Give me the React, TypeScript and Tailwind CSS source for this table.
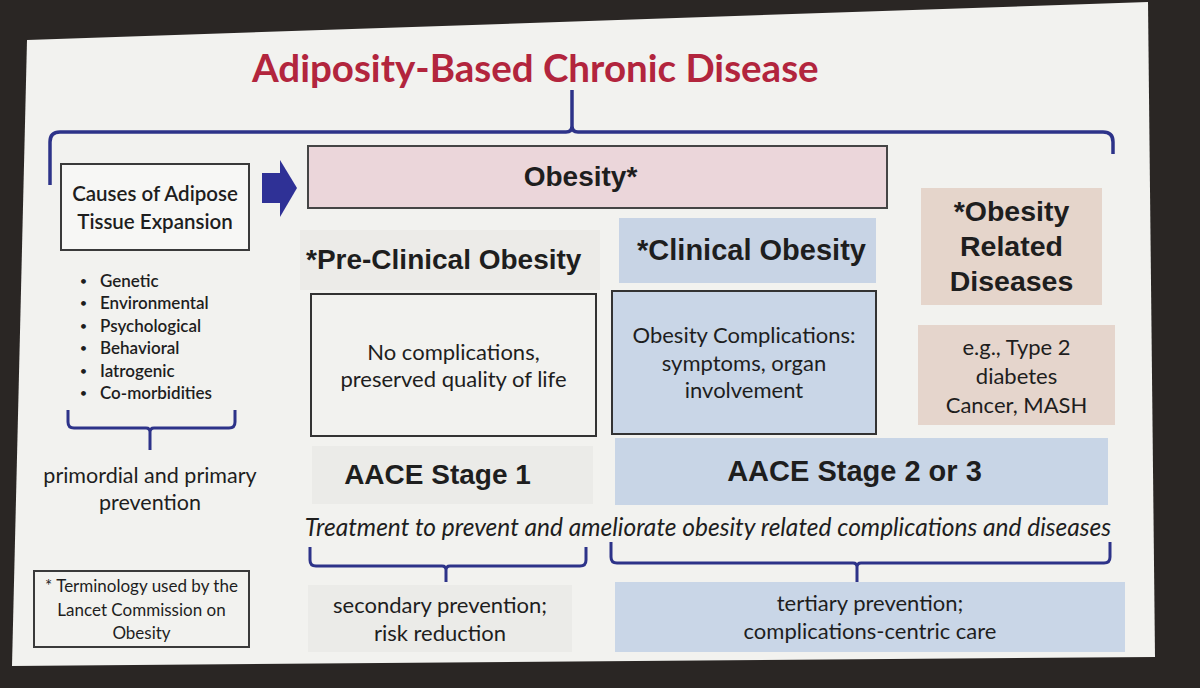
const cal = "[font-family:Lato,'Open_Sans',sans-serif]";
const ari = "[font-family:'Liberation_Sans',Arial,sans-serif]";

const causes = [
	"Genetic",
	"Environmental",
	"Psychological",
	"Behavioral",
	"Iatrogenic",
	"Co-morbidities",
];

// curly brace, opening downward (ends up, tip down)
const DownBrace = ({ x1, x2, tip, line, h }: { x1: number; x2: number; tip: number; line: number; h: number }) => (
	<path
		d={`M${x1},0 L${x1},${line - 6} Q${x1},${line} ${x1 + 6},${line} L${tip - 4},${line} Q${tip},${line} ${tip},${line + 4} L${tip},${h} M${tip},${line + 4} Q${tip},${line} ${tip + 4},${line} L${x2 - 6},${line} Q${x2},${line} ${x2},${line - 6} L${x2},0`}
		fill="none"
		stroke="#2d3389"
		strokeWidth={3}
	/>
);

export default function App() {
	return (
		<div className="w-[1200px] h-[688px] overflow-hidden bg-[#2a2624] pl-[12px]">
			<div className="w-[1144px] h-[666px] bg-[#f2f2ef] [clip-path:polygon(15px_40px,1136px_2px,1143px_657px,0px_666px)] flex flex-col text-[#1e1e1e]">
				<h1 className={`${cal} ml-[240px] mt-[44px] text-[38.5px] leading-[46px] font-bold text-[#b2253d]`}>
					Adiposity-Based Chronic Disease
				</h1>

				{/* big brace across the top */}
				<svg width="1138" height="47" className="block overflow-visible shrink-0">
					<path
						d="M38,95 L38,52 Q38,42 48,42 L554,42 Q560,42 560,36 L560,0 M560,36 Q560,42 566,42 L1091,42 Q1101,42 1101,52 L1101,64"
						fill="none"
						stroke="#2d3389"
						strokeWidth={3.5}
					/>
				</svg>

				<div className="flex">
					{/* left column */}
					<div className={`${cal} ml-[16px] w-[234px] flex flex-col`}>
						<div className="mt-[26px] ml-[32px] w-[190px] h-[88px] border-2 border-[#3a3a3a] bg-[#f7f7f5] flex items-center justify-center text-center text-[20.5px] leading-[28px] font-semibold">
							Causes of Adipose
							<br />
							Tissue Expansion
						</div>
						<ul className="mt-[19px] ml-[52px] text-[17px] leading-[22.4px] font-semibold">
							{causes.map((c) => (
								<li key={c} className="flex items-center">
									<span className="w-[20px] text-[12px]">•</span>
									{c}
								</li>
							))}
						</ul>
						<svg width="234" height="40" className="block mt-[6px]">
							<DownBrace x1={40} x2={207} tip={122} line={18} h={40} />
						</svg>
						<p className="mt-[12px] pl-[10px] text-center text-[21.5px] leading-[27px]">
							primordial and primary
							<br />
							prevention
						</p>
						<div className="mt-[54px] ml-[5px] w-[217px] h-[78px] border-2 border-[#3a3a3a] flex items-center justify-center text-center text-[17px] leading-[23.5px]">
							<span>
								* Terminology used by the
								<br />
								Lancet Commission on
								<br />
								Obesity
							</span>
						</div>
					</div>

					{/* arrow */}
					<svg width="38" height="58" className="block mt-[23px] shrink-0">
						<rect x="0" y="13" width="20" height="30" fill="#2f3196" />
						<polygon points="18,0 35,28 18,57" fill="#2f3196" />
					</svg>

					{/* right area */}
					<div className="w-[830px] flex flex-col">
						<div className="flex">
							<div className="w-[588px] flex flex-col">
								<div className={`${ari} mt-[8px] ml-[7px] w-[581px] h-[64px] border-2 border-[#454545] bg-[#ebd6da] flex items-center justify-center pr-[34px] text-[28px] font-bold`}>
									Obesity*
								</div>
								<div className={`${ari} h-[81px] flex items-start font-bold`}>
									<div className="mt-[21px] w-[300px] h-[60px] bg-[#ecebe8] flex items-center pl-[6px] text-[28px]">
										*Pre-Clinical Obesity
									</div>
									<div className="mt-[9px] ml-[19px] w-[257px] h-[65px] bg-[#c8d4e5] flex items-center justify-center pl-[8px] text-[29px]">
										*Clinical Obesity
									</div>
								</div>
								<div className={`${cal} flex items-start text-[22px] leading-[27.5px]`}>
									<div className="mt-[3px] ml-[10px] w-[287px] h-[144px] border-2 border-[#333] flex items-center justify-center text-center">
										<span>
											No complications,
											<br />
											preserved quality of life
										</span>
									</div>
									<div className="ml-[14px] w-[266px] h-[145px] border-2 border-[#333] bg-[#c9d6e7] flex items-center justify-center text-center">
										<span>
											Obesity Complications:
											<br />
											symptoms, organ
											<br />
											involvement
										</span>
									</div>
								</div>
							</div>

							<div className="ml-[27px] w-[205px] flex flex-col">
								<div className={`${ari} mt-[51px] ml-[6px] w-[181px] h-[117px] bg-[#e5d5cb] flex items-center justify-center text-center text-[28.5px] leading-[35px] font-bold`}>
									<span>
										*Obesity
										<br />
										Related
										<br />
										Diseases
									</span>
								</div>
								<div className={`${cal} mt-[20px] ml-[3px] w-[197px] h-[100px] bg-[#e5d5cc] flex items-center justify-center text-center text-[22px] leading-[29px]`}>
									<span>
										e.g., Type 2
										<br />
										diabetes
										<br />
										Cancer, MASH
									</span>
								</div>
							</div>
						</div>

						<div className={`${ari} flex items-start text-[28px] font-bold`}>
							<div className="mt-[9px] ml-[12px] w-[281px] h-[58px] bg-[#ebebe8] flex items-center justify-center pr-[30px]">
								AACE Stage 1
							</div>
							<div className="mt-[1px] ml-[22px] w-[493px] h-[67px] bg-[#c8d5e6] flex items-center justify-center pr-[14px] text-[29px]">
								AACE Stage 2 or 3
							</div>
						</div>

						<p className={`${cal} mt-[7px] w-[816px] text-center text-[24.5px] leading-[30px] italic`}>
							Treatment to prevent and ameliorate obesity related complications and diseases
						</p>

						<svg width="830" height="40" className="block">
							<g transform="translate(0,5)">
								<DownBrace x1={10} x2={286} tip={146} line={19} h={35} />
							</g>
							<DownBrace x1={311} x2={810} tip={557} line={21} h={40} />
						</svg>

						<div className={`${cal} flex items-start text-[22px] leading-[28px]`}>
							<div className="mt-[3px] ml-[8px] w-[264px] h-[67px] bg-[#ebebe8] flex items-center justify-center text-center">
								<span>
									secondary prevention;
									<br />
									risk reduction
								</span>
							</div>
							<div className="ml-[43px] w-[510px] h-[70px] bg-[#c9d6e7] flex items-center justify-center text-center">
								<span>
									tertiary prevention;
									<br />
									complications-centric care
								</span>
							</div>
						</div>
					</div>
				</div>
			</div>
		</div>
	);
}
